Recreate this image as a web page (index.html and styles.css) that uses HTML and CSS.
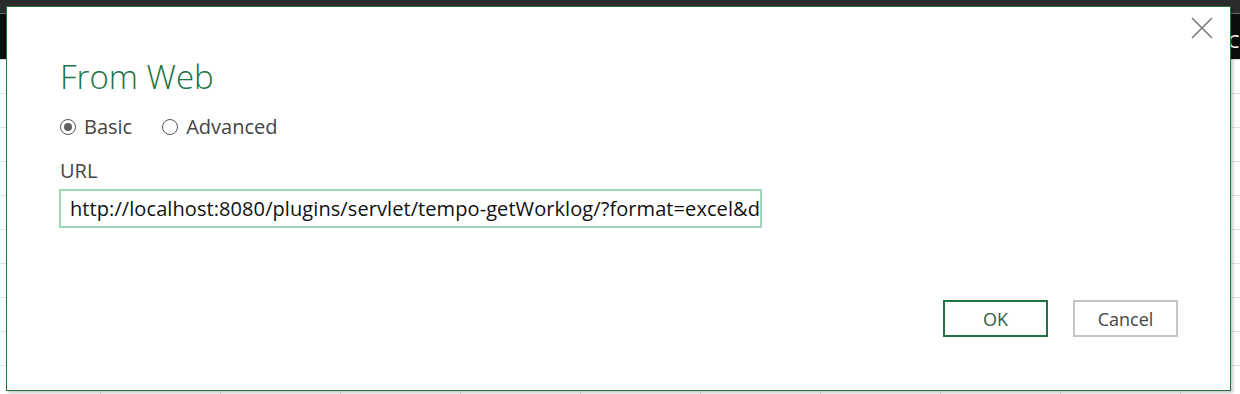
FILE: index.html
```html
<!DOCTYPE html>
<html lang="en">
<head>
  <meta charset="UTF-8" />
  <title>From Web</title>
  <link rel="stylesheet" href="styles.css">
</head>
<body>
  <div class="ribbon">
    <div class="ribbon-top"></div>
    <div class="ribbon-bar"><span class="ribbon-text">C</span></div>
  </div>
  <div class="sheet"></div>

  <div class="dialog">
    <button class="close" aria-label="Close">
      <svg width="22" height="22" viewBox="0 0 22 22">
        <path d="M1 1 L21 21 M21 1 L1 21" stroke="#7a7a7a" stroke-width="1.6" fill="none"/>
      </svg>
    </button>

    <h1 class="title">From Web</h1>

    <div class="modes">
      <label class="radio"><span class="dot checked"></span>Basic</label>
      <label class="radio"><span class="dot"></span>Advanced</label>
    </div>

    <label class="field-label" for="url">URL</label>
    <div class="url-box">
      <input id="url" type="text" value="http://localhost:8080/plugins/servlet/tempo-getWorklog/?format=excel&amp;diffOnly=false&amp;tempoApiToken=xxxx" />
    </div>

    <div class="actions">
      <button class="btn primary">OK</button>
      <button class="btn">Cancel</button>
    </div>
  </div>
</body>
</html>
```

FILE: styles.css
```css
html, body {
  margin: 0;
  height: 100%;
  overflow: hidden;
  background: #fff;
  font-family: 'Open Sans', 'Noto Sans', sans-serif;
}

.ribbon-top {
  height: 13px;
  background: #2b2b2b;
  border-bottom: 1px solid #6a6a6a;
}

.ribbon-bar {
  height: 45px;
  background: #0c0c0c;
  padding-left: 1228px;
  white-space: nowrap;
  overflow: hidden;
}

.ribbon-text {
  display: inline-block;
  margin-top: 16px;
  color: #fff;
  font-family: 'Noto Sans', sans-serif;
  font-size: 18px;
  line-height: 22px;
}

.sheet {
  height: 335px;
  border-top: 1px solid #e0e0e0;
  box-sizing: border-box;
  background-image:
    linear-gradient(to bottom, transparent 33px, #e1e1e1 33px),
    linear-gradient(to right, transparent 119px, #e1e1e1 119px);
  background-size: 100% 34px, 120px 100%;
  background-position: 0 0, -19px 0;
}

.dialog {
  position: absolute;
  left: 6px;
  top: 6px;
  width: 1225px;
  height: 385px;
  padding: 0 0 0 53px;
  box-sizing: border-box;
  border: 1px solid #217346;
  background: #fff;
  box-shadow: 2px 2px 3px rgba(0, 0, 0, 0.22);
}

.close {
  position: absolute;
  right: 17px;
  top: 10px;
  padding: 0;
  border: 0;
  background: none;
}

.title {
  margin: 47px 0 0;
  font-size: 33px;
  font-weight: 300;
  color: #217346;
  line-height: 46px;
}

.modes {
  display: flex;
  gap: 30px;
  margin-top: 13px;
  color: #444;
  font-size: 20px;
  line-height: 28px;
}

.radio {
  display: flex;
  align-items: center;
  gap: 8px;
}

.dot {
  width: 16px;
  height: 16px;
  border: 1px solid #555;
  border-radius: 50%;
  box-sizing: border-box;
  position: relative;
}

.dot.checked::after {
  content: "";
  position: absolute;
  left: 3px;
  top: 3px;
  width: 8px;
  height: 8px;
  border-radius: 50%;
  background: #606060;
}

.field-label {
  display: block;
  margin-top: 17px;
  color: #444;
  font-size: 20px;
  line-height: 26px;
}

.url-box {
  width: 703px;
  height: 39px;
  margin-top: 5px;
  margin-left: -1px;
  border: 2px solid #9fd5b7;
  box-sizing: border-box;
  overflow: hidden;
}

.url-box input {
  width: 100%;
  height: 100%;
  border: 0;
  outline: none;
  padding: 0 0 0 9px;
  box-sizing: border-box;
  font-family: 'Open Sans', 'Noto Sans', sans-serif;
  font-size: 20px;
  letter-spacing: 0.08px;
  color: #111;
  background: transparent;
}

.actions {
  display: flex;
  justify-content: flex-end;
  gap: 25px;
  margin: 72px 52px 0 0;
}

.btn {
  width: 105px;
  height: 37px;
  border: 2px solid #c6c6c6;
  background: #fff;
  color: #444;
  font-family: 'Open Sans', 'Noto Sans', sans-serif;
  font-size: 18px;
  padding: 0;
}

.btn.primary {
  border-color: #217346;
  color: #2f5d45;
}
```
